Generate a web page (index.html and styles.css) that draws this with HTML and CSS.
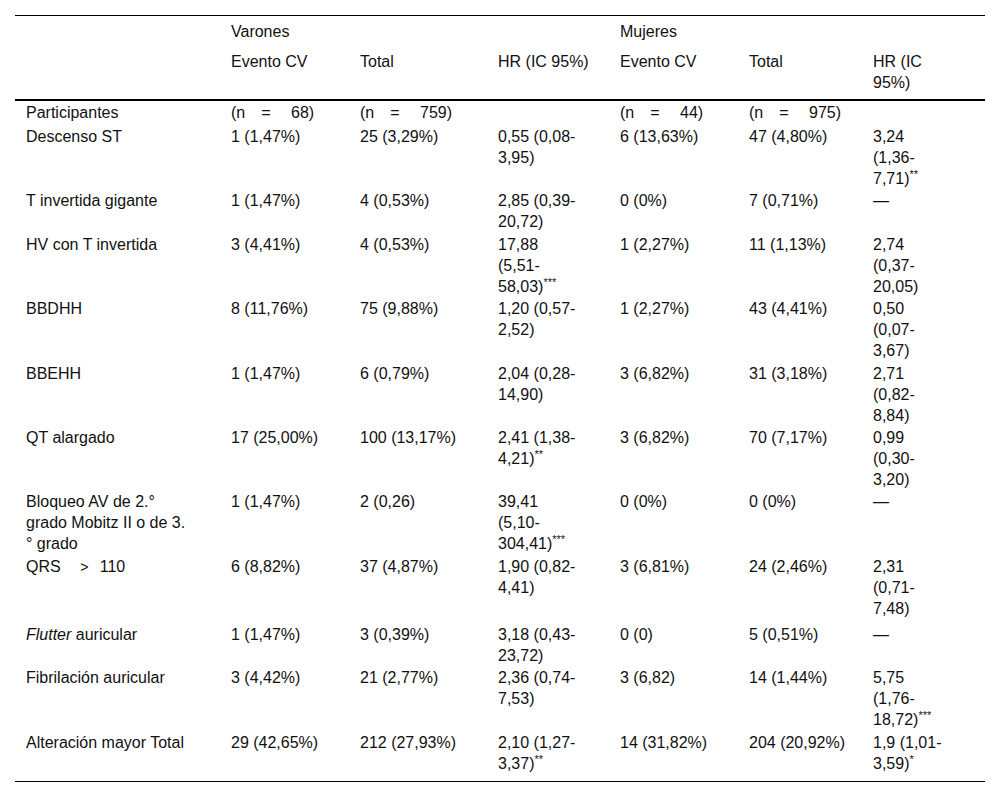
FILE: index.html
```html
<!DOCTYPE html>
<html lang="es">
<head>
<meta charset="utf-8">
<title>Tabla</title>
<link rel="stylesheet" href="styles.css">
</head>
<body>
<table class="data">
  <colgroup>
    <col class="w1"><col class="w2"><col class="w3"><col class="w4"><col class="w5"><col class="w6"><col class="w7">
  </colgroup>
  <thead>
    <tr class="group">
      <th class="c1"></th>
      <th colspan="3">Varones</th>
      <th colspan="3">Mujeres</th>
    </tr>
    <tr class="sub">
      <th class="c1"></th>
      <th>Evento CV</th>
      <th>Total</th>
      <th class="hr nowrap">HR (IC 95%)</th>
      <th>Evento CV</th>
      <th>Total</th>
      <th class="hr2">HR (IC 95%)</th>
    </tr>
  </thead>
  <tbody>
    <tr class="tall">
      <td class="c1">Participantes</td>
      <td>(n&emsp;=&emsp; 68)</td>
      <td>(n&emsp;=&emsp; 759)</td>
      <td class="hr"></td>
      <td>(n&emsp;=&emsp; 44)</td>
      <td>(n&emsp;=&emsp; 975)</td>
      <td class="hr2"></td>
    </tr>
    <tr>
      <td class="c1">Descenso ST</td>
      <td>1 (1,47%)</td>
      <td>25 (3,29%)</td>
      <td class="hr">0,55 (0,08-<wbr>3,95)</td>
      <td>6 (13,63%)</td>
      <td>47 (4,80%)</td>
      <td class="hr2">3,24 (1,36-<wbr>7,71)<sup>**</sup></td>
    </tr>
    <tr>
      <td class="c1">T invertida gigante</td>
      <td>1 (1,47%)</td>
      <td>4 (0,53%)</td>
      <td class="hr">2,85 (0,39-<wbr>20,72)</td>
      <td>0 (0%)</td>
      <td>7 (0,71%)</td>
      <td class="hr2">—</td>
    </tr>
    <tr>
      <td class="c1">HV con T invertida</td>
      <td>3 (4,41%)</td>
      <td>4 (0,53%)</td>
      <td class="hr">17,88 (5,51-<wbr>58,03)<sup>***</sup></td>
      <td>1 (2,27%)</td>
      <td>11 (1,13%)</td>
      <td class="hr2">2,74 (0,37-<wbr>20,05)</td>
    </tr>
    <tr>
      <td class="c1">BBDHH</td>
      <td>8 (11,76%)</td>
      <td>75 (9,88%)</td>
      <td class="hr">1,20 (0,57-<wbr>2,52)</td>
      <td>1 (2,27%)</td>
      <td>43 (4,41%)</td>
      <td class="hr2">0,50 (0,07-<wbr>3,67)</td>
    </tr>
    <tr>
      <td class="c1">BBEHH</td>
      <td>1 (1,47%)</td>
      <td>6 (0,79%)</td>
      <td class="hr">2,04 (0,28-<wbr>14,90)</td>
      <td>3 (6,82%)</td>
      <td>31 (3,18%)</td>
      <td class="hr2">2,71 (0,82-<wbr>8,84)</td>
    </tr>
    <tr>
      <td class="c1">QT alargado</td>
      <td>17 (25,00%)</td>
      <td>100 (13,17%)</td>
      <td class="hr">2,41 (1,38-<wbr>4,21)<sup>**</sup></td>
      <td>3 (6,82%)</td>
      <td>70 (7,17%)</td>
      <td class="hr2">0,99 (0,30-<wbr>3,20)</td>
    </tr>
    <tr>
      <td class="c1">Bloqueo AV de 2.° grado Mobitz II o de 3.<wbr>° grado</td>
      <td>1 (1,47%)</td>
      <td>2 (0,26)</td>
      <td class="hr">39,41 (5,10-<wbr>304,41)<sup>***</sup></td>
      <td>0 (0%)</td>
      <td>0 (0%)</td>
      <td class="hr2">—</td>
    </tr>
    <tr class="taller">
      <td class="c1">QRS <span class="gt">&gt;</span> 110</td>
      <td>6 (8,82%)</td>
      <td>37 (4,87%)</td>
      <td class="hr">1,90 (0,82-<wbr>4,41)</td>
      <td>3 (6,81%)</td>
      <td>24 (2,46%)</td>
      <td class="hr2">2,31 (0,71-<wbr>7,48)</td>
    </tr>
    <tr>
      <td class="c1"><em>Flutter</em> auricular</td>
      <td>1 (1,47%)</td>
      <td>3 (0,39%)</td>
      <td class="hr">3,18 (0,43-<wbr>23,72)</td>
      <td>0 (0)</td>
      <td>5 (0,51%)</td>
      <td class="hr2">—</td>
    </tr>
    <tr>
      <td class="c1">Fibrilación auricular</td>
      <td>3 (4,42%)</td>
      <td>21 (2,77%)</td>
      <td class="hr">2,36 (0,74-<wbr>7,53)</td>
      <td>3 (6,82)</td>
      <td>14 (1,44%)</td>
      <td class="hr2">5,75 (1,76-<wbr>18,72)<sup>***</sup></td>
    </tr>
    <tr class="last">
      <td class="c1">Alteración mayor Total</td>
      <td>29 (42,65%)</td>
      <td>212 (27,93%)</td>
      <td class="hr">2,10 (1,27-<wbr>3,37)<sup>**</sup></td>
      <td>14 (31,82%)</td>
      <td>204 (20,92%)</td>
      <td class="hr2">1,9 (1,01-<wbr>3,59)<sup>*</sup></td>
    </tr>
  </tbody>
</table>
</body>
</html>
```

FILE: styles.css
```css
html, body {
  margin: 0;
  padding: 0;
  background: #ffffff;
}

body {
  padding: 15px;
  font-family: "Liberation Sans", Arial, sans-serif;
  font-size: 16px;
  color: #111111;
}

.data {
  width: 970px;
  table-layout: fixed;
  border-collapse: collapse;
  border-top: 1px solid #000000;
  border-bottom: 1px solid #000000;
}

.w1 { width: 210px; }
.w2 { width: 129px; }
.w3 { width: 138px; }
.w4 { width: 122px; }
.w5 { width: 129px; }
.w6 { width: 124px; }
.w7 { width: 118px; }

.data th,
.data td {
  text-align: left;
  vertical-align: top;
  font-weight: normal;
  line-height: 21px;
  padding: 1px 6px 0.4px 6px;
}

.data .c1 {
  padding-left: 11px;
  padding-right: 36px;
}

.data .hr {
  padding-right: 36px;
}

.data .hr2 {
  padding-right: 40px;
}

.nowrap {
  white-space: nowrap;
}

.data thead tr.group th {
  padding-top: 5px;
  padding-bottom: 4px;
}

.data thead tr.sub th {
  padding-top: 5px;
  padding-bottom: 6px;
  border-bottom: 2px solid #000000;
}

.data tr.tall td {
  padding-bottom: 2px;
}

.data tr.taller td {
  padding-bottom: 4px;
}

.data tr.last td {
  padding-bottom: 7px;
}

.data sup {
  font-size: 11px;
  line-height: 0;
  vertical-align: 6px;
}

.gt {
  font-size: 14px;
  margin: 0 7px 0 15px;
}
```
